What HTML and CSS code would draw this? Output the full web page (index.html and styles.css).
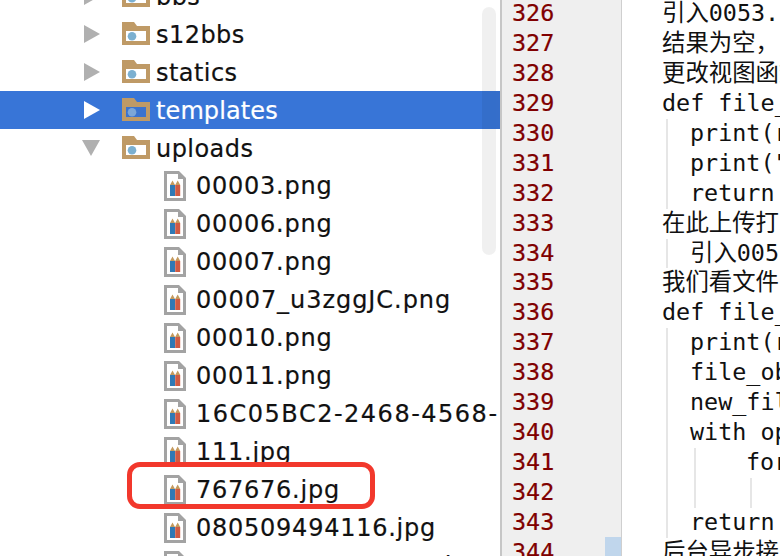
FILE: index.html
```html
<!DOCTYPE html>
<html lang="zh">
<head>
<meta charset="utf-8">
<title>Project</title>
<link rel="stylesheet" href="styles.css">
</head>
<body>
<svg class="defs" width="0" height="0" aria-hidden="true">
  <defs>
    <symbol id="folder" viewBox="0 0 28 23">
      <path d="M0 0H12L15 4H28V23H0Z" fill="#bf9a66"/>
      <rect x="4" y="9" width="20" height="10" fill="#fff"/>
      <circle cx="10" cy="14.300" r="4.300" fill="#7cb0d0"/>
    </symbol>
    <symbol id="folder-sel" viewBox="0 0 28 23">
      <path d="M0 0H12L15 4H28V23H0Z" fill="#bf9a66"/>
      <rect x="4" y="9" width="20" height="10" fill="#3b73cf"/>
      <circle cx="10" cy="14.300" r="4.300" fill="#7ca6d8"/>
    </symbol>
    <symbol id="file" viewBox="0 0 22 30">
      <path d="M0 0H15L22 7V30H0Z" fill="#a3a3a3"/>
      <path d="M3 3H14V8H19V27H3Z" fill="#fff"/>
      <rect x="6" y="14" width="5" height="11" fill="#2f79b5"/>
      <rect x="11.200" y="14" width="5" height="11" fill="#cf5a43"/>
      <path d="M6 14L8.500 9.500L11 14ZM11.200 14L13.700 9.500L16.200 14Z" fill="#c49a5e"/>
    </symbol>
  </defs>
</svg>
<main class="window">
  <section class="tree">
    <div class="tree-list">
      <div class="row dir"><span class="tri tri-r"></span><svg class="ic-folder"><use href="#folder"/></svg><span class="name">bbs</span></div>
      <div class="row dir"><span class="tri tri-r"></span><svg class="ic-folder"><use href="#folder"/></svg><span class="name">s12bbs</span></div>
      <div class="row dir"><span class="tri tri-r"></span><svg class="ic-folder"><use href="#folder"/></svg><span class="name">statics</span></div>
      <div class="row dir selected"><span class="tri tri-r"></span><svg class="ic-folder"><use href="#folder-sel"/></svg><span class="name">templates</span></div>
      <div class="row dir"><span class="tri tri-d"></span><svg class="ic-folder"><use href="#folder"/></svg><span class="name">uploads</span></div>
      <div class="row file"><svg class="ic-file"><use href="#file"/></svg><span class="name">00003.png</span></div>
      <div class="row file"><svg class="ic-file"><use href="#file"/></svg><span class="name">00006.png</span></div>
      <div class="row file"><svg class="ic-file"><use href="#file"/></svg><span class="name">00007.png</span></div>
      <div class="row file"><svg class="ic-file"><use href="#file"/></svg><span class="name name-long">00007_u3zggJC.png</span></div>
      <div class="row file"><svg class="ic-file"><use href="#file"/></svg><span class="name">00010.png</span></div>
      <div class="row file"><svg class="ic-file"><use href="#file"/></svg><span class="name">00011.png</span></div>
      <div class="row file"><svg class="ic-file"><use href="#file"/></svg><span class="name name-uuid">16C05BC2-2468-4568-</span></div>
      <div class="row file"><svg class="ic-file"><use href="#file"/></svg><span class="name">111.jpg</span></div>
      <div class="row file"><svg class="ic-file"><use href="#file"/></svg><span class="name">767676.jpg</span></div>
      <div class="row file"><svg class="ic-file"><use href="#file"/></svg><span class="name">080509494116.jpg</span></div>
      <div class="row file"><svg class="ic-file"><use href="#file"/></svg><span class="name">182102728954393.jpg</span></div>
    </div>
    <div class="scrollbar"></div>
    <div class="annotation"></div>
  </section>
  <section class="gutter">
    <div class="num">326</div><div class="num">327</div><div class="num">328</div><div class="num">329</div><div class="num">330</div><div class="num">331</div><div class="num">332</div><div class="num">333</div><div class="num">334</div><div class="num">335</div><div class="num">336</div><div class="num">337</div><div class="num">338</div><div class="num">339</div><div class="num">340</div><div class="num">341</div><div class="num">342</div><div class="num">343</div><div class="num">344</div>
    <div class="marker"></div>
  </section>
  <section class="code">
    <div class="line">引入0053.jpg</div>
    <div class="line">结果为空，</div>
    <div class="line">更改视图函数</div>
    <div class="line">def file_upload(request):</div>
    <div class="line"><span class="ind"></span>print(request.POST)</div>
    <div class="line"><span class="ind"></span>print("")</div>
    <div class="line"><span class="ind"></span>return HttpResponse</div>
    <div class="line">在此上传打印</div>
    <div class="line"><span class="ind"></span>引入0053.jpg</div>
    <div class="line">我们看文件</div>
    <div class="line">def file_upload(request):</div>
    <div class="line"><span class="ind"></span>print(request.POST)</div>
    <div class="line"><span class="ind"></span>file_obj = request</div>
    <div class="line"><span class="ind"></span>new_file = open</div>
    <div class="line"><span class="ind"></span>with open(new_file)</div>
    <div class="line"><span class="ind"></span><span class="ind ind-wide"></span>for chunk in file</div>
    <div class="line"><span class="ind"></span><span class="ind ind-wide"></span><span class="ind"></span></div>
    <div class="line"><span class="ind"></span>return HttpResponse</div>
    <div class="line">后台异步接收</div>
  </section>
</main>
</body>
</html>
```
FILE: styles.css
```css
* { box-sizing: border-box; }
html, body { margin: 0; height: 100%; overflow: hidden; background: #fff; }
.defs { position: absolute; }
.window { display: flex; width: 780px; height: 556px; overflow: hidden; }

.tree {
  position: relative;
  flex: 0 0 500px;
  height: 556px;
  overflow: hidden;
  font-family: "DejaVu Sans", sans-serif;
  font-size: 24px;
  color: #111;
  -webkit-text-stroke: 0.2px currentColor;
}
.tree-list { margin-top: -23px; }
.row { display: flex; align-items: center; height: 38px; white-space: nowrap; }
.dir { padding-left: 82px; letter-spacing: 0.45px; }
.dir .name { padding-top: 2px; }
.file { padding-left: 164px; letter-spacing: 0.75px; }
.name-long { letter-spacing: 0.95px; }
.name-uuid { letter-spacing: 1.5px; }
.selected {
  background: linear-gradient(to right, #3875d7 496px, #356eca 496px);
  color: #fff;
  letter-spacing: 0.1px;
}
.tri { flex: 0 0 auto; width: 0; height: 0; border-style: solid; border-color: transparent; }
.tri-r { margin: 0 22px 0 2px; border-width: 9px 0 9px 16px; border-left-color: #b0b0b0; }
.selected .tri-r { border-left-color: #fff; }
.tri-d { margin: 0 22px 0 0; border-width: 16px 9px 0 9px; border-top-color: #b0b0b0; }
.ic-folder { flex: 0 0 auto; width: 28px; height: 23px; margin: 0 6px 2px 0; }
.ic-file { flex: 0 0 auto; width: 22px; height: 30px; margin-right: 10px; }
.scrollbar {
  position: absolute;
  left: 482px;
  top: 7px;
  width: 14px;
  height: 248px;
  border-radius: 7px;
  background: rgba(0, 0, 0, 0.06);
}
.annotation {
  position: absolute;
  left: 127px;
  top: 462px;
  width: 248px;
  height: 47px;
  border: 5px solid #f2382c;
  border-radius: 13px;
}

.gutter {
  position: relative;
  flex: 0 0 122px;
  height: 556px;
  overflow: hidden;
  padding-left: 10px;
  background: #efefef;
  border-left: 2px solid #c6c6c6;
  border-right: 1px solid #cfcfcf;
  font-family: "DejaVu Sans Mono", monospace;
  font-size: 23.400px;
  line-height: 29.940px;
  color: #800000;
  -webkit-text-stroke: 0.2px currentColor;
}
.num { height: 29.940px; }
.num:first-child { margin-top: -1px; }
.marker {
  position: absolute;
  right: 0;
  bottom: 0;
  width: 16px;
  height: 19px;
  background: #c0d6ec;
}

.code {
  flex: 1 1 auto;
  min-width: 0;
  height: 556px;
  overflow: hidden;
  padding-left: 40px;
  font-family: "DejaVu Sans Mono", "Noto Sans CJK SC", monospace;
  font-size: 23.400px;
  color: #111;
}
.line {
  display: flex;
  height: 29.940px;
  line-height: 29.940px;
  white-space: pre;
}
.line:first-child { margin-top: -1px; }
.ind {
  flex: 0 0 auto;
  width: 28px;
  background: linear-gradient(#e6e6e6, #e6e6e6) 4px 0 / 2px 100% no-repeat;
}
.ind-wide { width: 56px; }
```
